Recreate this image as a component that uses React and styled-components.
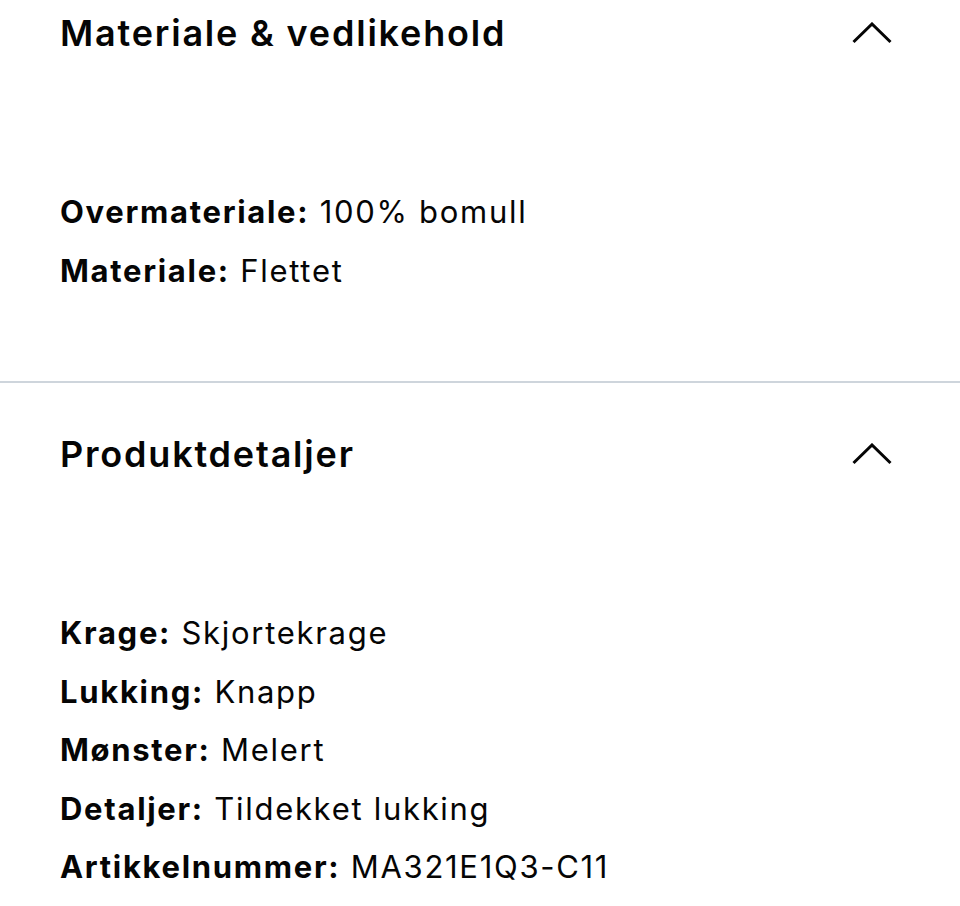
import React from "react";
import styled, { createGlobalStyle } from "styled-components";

const GlobalStyle = createGlobalStyle`
  body {
    margin: 0;
    background: #ffffff;
    font-family: Inter, "Liberation Sans", sans-serif;
    color: #050505;
  }
`;

const sections = [
  {
    title: "Materiale & vedlikehold",
    rows: [
      ["Overmateriale:", "100% bomull"],
      ["Materiale:", "Flettet"],
    ],
  },
  {
    title: "Produktdetaljer",
    rows: [
      ["Krage:", "Skjortekrage"],
      ["Lukking:", "Knapp"],
      ["Mønster:", "Melert"],
      ["Detaljer:", "Tildekket lukking"],
      ["Artikkelnummer:", "MA321E1Q3-C11"],
    ],
  },
];

const ChevronUp = () => (
  <svg width="40" height="22" viewBox="0 0 40 22" fill="none">
    <polyline
      points="1.5,20 20,2 38.5,20"
      stroke="#050505"
      strokeWidth="3"
      strokeLinecap="butt"
      strokeLinejoin="miter"
    />
  </svg>
);

const App = () => {
  return (
    <>
      <GlobalStyle />
      <StyledPage>
        {sections.map((section, i) => (
          <StyledSection key={section.title} $last={i === sections.length - 1}>
            <StyledHeader>
              <h2>{section.title}</h2>
              <ChevronUp />
            </StyledHeader>
            <StyledList>
              {section.rows.map(([label, value]) => (
                <li key={label}>
                  <b>{label}</b> {value}
                </li>
              ))}
            </StyledList>
          </StyledSection>
        ))}
      </StyledPage>
    </>
  );
};

const StyledPage = styled.div`
  width: 960px;
  height: 906px;
  overflow: hidden;
`;

const StyledSection = styled.section`
  padding: ${(p) => (p.$last ? "38px 68px 0 60px" : "38px 68px 81px 60px")};
  border-bottom: ${(p) => (p.$last ? "none" : "2px solid #ced5dc")};
  &:first-child {
    padding-top: 0;
  }
`;

const StyledHeader = styled.div`
  height: 66px;
  display: flex;
  align-items: center;
  justify-content: space-between;
  h2 {
    margin: 0;
    font-size: 36px;
    font-weight: 600;
    letter-spacing: 1.8px;
  }
`;

const StyledList = styled.ul`
  list-style: none;
  margin: 117px 0 0 0;
  padding: 0;
  li {
    font-size: 31px;
    line-height: 58.5px;
    letter-spacing: 1.7px;
    white-space: nowrap;
  }
  b {
    font-weight: 700;
  }
`;

export default App;
